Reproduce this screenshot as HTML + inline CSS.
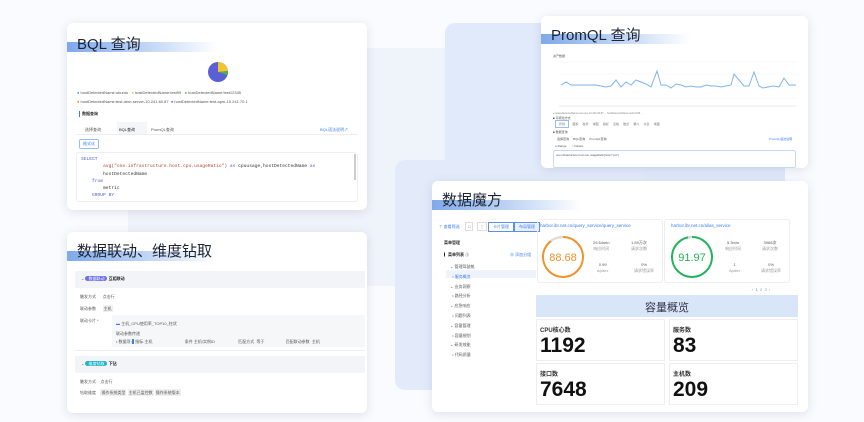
<!DOCTYPE html>
<html><head><meta charset="utf-8"><style>
*{margin:0;padding:0;box-sizing:border-box}
body{width:864px;height:422px;background:#f9fbfe;position:relative;overflow:hidden;font-family:"Liberation Sans","Noto Sans CJK SC",sans-serif;color:#333}
.bg{position:absolute;border-radius:10px}
.card{position:absolute;background:#fff;border-radius:6px;box-shadow:0 2px 10px rgba(60,80,130,.15);overflow:hidden}
.tt{position:absolute;left:0;font-size:15px;color:#1d2433;padding-left:10px;line-height:18px;z-index:2}
.bar{position:absolute;left:0;height:10px;background:linear-gradient(90deg,#7fa9ea,#c9dbf7 60%,rgba(255,255,255,0));z-index:1}
.s{position:absolute;font-size:4px;color:#555;white-space:nowrap}
.b{position:absolute;background:#f3f4f7}
.num{position:absolute;font-size:21px;font-weight:bold;color:#111}
.lab{position:absolute;font-size:6px;font-weight:bold;color:#333}
</style></head><body>
<div class="bg" style="left:128px;top:48px;width:320px;height:238px;background:#eff3fa;border-radius:0"></div>
<div class="bg" style="left:445px;top:23px;width:340px;height:280px;background:#e1eafa"></div>
<div class="bg" style="left:395px;top:160px;width:250px;height:230px;background:#e3ebfa"></div>

<!-- BQL -->
<div class="card" style="left:67px;top:23px;width:300px;height:187px">
<div class="bar" style="top:19px;width:150px"></div>
<div class="tt" style="top:13px">BQL 查询</div>
<svg style="position:absolute;left:140px;top:38px" width="22" height="22" viewBox="0 0 22 22"><circle cx="11" cy="11" r="10" fill="#5b5fd6"/><path d="M11 11V1A10 10 0 0 1 21 10Z" fill="#f4c430"/><path d="M11 11L21 10A10 10 0 0 1 20.5 14Z" fill="#4caf50"/></svg>
<div class="s" style="left:10px;top:67px"><span style="color:#3b8ff0">●</span> hostDetectedName:ubuntu &nbsp;&nbsp;<span style="color:#f4c430">●</span> hostDetectedName:test99 &nbsp;&nbsp;<span style="color:#4caf50">●</span> hostDetectedName:test12345</div>
<div class="s" style="left:10px;top:76px"><span style="color:#f08030">●</span> hostDetectedName:test-dem-server-10.241.60.87 &nbsp;<span style="color:#5b5fd6">●</span> hostDetectedName:test-apm-10.241.70.1</div>
<div class="s" style="left:12px;top:88px;font-weight:bold;color:#222;border-left:1px solid #3b7ef0;padding-left:2px">数据查询</div>
<div style="position:absolute;left:50px;top:99px;width:30px;height:12px;background:#f5f6f8"></div>
<div class="s" style="left:18px;top:104px">选择查询</div><div class="s" style="left:52px;top:104px;color:#222">BQL查询</div><div class="s" style="left:84px;top:104px">PromQL查询</div>
<div class="s" style="left:253px;top:104px;color:#3b7ef0">BQL语法说明↗</div>
<div style="position:absolute;left:9px;top:111px;width:282px;height:1px;background:#eee"></div>
<div class="s" style="left:12px;top:116px;border:1px solid #9bbcf0;color:#3b7ef0;padding:1px 3px;border-radius:2px">格式化</div>
<div style="position:absolute;left:9px;top:129px;width:282px;height:50px;border:1px solid #eee;border-radius:3px"></div>
<div class="s" style="left:14px;top:133px;font-family:'Liberation Mono',monospace;font-size:4.6px;line-height:7.3px;color:#333">
<span style="color:#5560d0">SELECT</span><br>
&nbsp;&nbsp;&nbsp;&nbsp;&nbsp;&nbsp;&nbsp;&nbsp;<span style="color:#b0453a">avg("one.infrastructure.host.cpu.usageRatio")</span> <span style="color:#5560d0">as</span> cpuusage,hostDetectedName <span style="color:#5560d0">as</span><br>
&nbsp;&nbsp;&nbsp;&nbsp;&nbsp;&nbsp;&nbsp;&nbsp;hostDetectedName<br>
&nbsp;&nbsp;&nbsp;&nbsp;<span style="color:#5560d0">from</span><br>
&nbsp;&nbsp;&nbsp;&nbsp;&nbsp;&nbsp;&nbsp;&nbsp;metric<br>
&nbsp;&nbsp;&nbsp;&nbsp;<span style="color:#5560d0">GROUP BY</span></div>
<div style="position:absolute;left:287px;top:131px;width:2px;height:26px;background:#ccc"></div>
</div>

<!-- Linkage -->
<div class="card" style="left:67px;top:232px;width:300px;height:181px">
<div class="bar" style="top:19px;width:150px"></div>
<div class="tt" style="top:11px">数据联动、维度钻取</div>
<div class="b" style="left:8px;top:39px;width:290px;height:17px"></div>
<div class="s" style="left:14px;top:44px">⌄ <span style="background:#6a6ff0;color:#fff;border-radius:4px;padding:0 3px">数据联动</span> <b style="color:#222">互相联动</b></div>
<div class="s" style="left:13px;top:62px">触发方式 &nbsp;&nbsp;&nbsp;&nbsp;&nbsp;点击行</div>
<div class="s" style="left:13px;top:74px">联动参数 &nbsp;&nbsp;&nbsp;&nbsp;&nbsp;<span style="background:#f0f0f0;padding:1px">主机</span></div>
<div class="s" style="left:13px;top:86px">联动卡片 *</div>
<div class="b" style="left:45px;top:83px;width:253px;height:32px;background:#f6f7f9"></div>
<div class="s" style="left:49px;top:89px"><span style="color:#3b7ef0">▬</span> 主机_CPU使用率_TOP10_柱状</div>
<div class="s" style="left:49px;top:99px">联动参数传递</div>
<div class="s" style="left:49px;top:107px">• 数据项 <span style="background:#3b7ef0;color:#3b7ef0">■</span> 指标-主机 &nbsp;&nbsp;&nbsp;&nbsp;&nbsp;&nbsp;&nbsp;&nbsp;&nbsp;&nbsp;&nbsp;&nbsp;&nbsp;&nbsp;&nbsp;&nbsp;&nbsp;&nbsp;&nbsp;&nbsp;&nbsp;&nbsp;&nbsp;&nbsp;&nbsp;&nbsp;&nbsp; 条件 主机/实例ID &nbsp;&nbsp;&nbsp;&nbsp;&nbsp;&nbsp;&nbsp;&nbsp;&nbsp;&nbsp;&nbsp;&nbsp;&nbsp;&nbsp;&nbsp;&nbsp;&nbsp;&nbsp;&nbsp; 匹配方式 &nbsp;等于 &nbsp;&nbsp;&nbsp;&nbsp;&nbsp;&nbsp;&nbsp;&nbsp;&nbsp;&nbsp;&nbsp;&nbsp;&nbsp;&nbsp;&nbsp;&nbsp;&nbsp; 匹配联动参数 &nbsp;主机</div>
<div style="position:absolute;left:8px;top:118px;width:290px;height:1px;background:#eee"></div>
<div class="b" style="left:8px;top:124px;width:290px;height:17px"></div>
<div class="s" style="left:14px;top:129px">⌄ <span style="background:#1fb5c8;color:#fff;border-radius:4px;padding:0 3px">维度钻取</span> <b style="color:#222">下钻</b></div>
<div class="s" style="left:13px;top:147px">触发方式 &nbsp;&nbsp;&nbsp;点击行</div>
<div class="s" style="left:13px;top:158px">钻取维度 &nbsp;&nbsp;&nbsp;<span style="background:#f0f0f0;padding:1px">操作系统类型</span> <span style="background:#f0f0f0;padding:1px">主机已监控数</span> <span style="background:#f0f0f0;padding:1px">操作系统版本</span></div>
</div>

<!-- PromQL -->
<div class="card" style="left:541px;top:16px;width:267px;height:152px">
<div class="bar" style="top:18px;width:150px"></div>
<div class="tt" style="top:11px">PromQL 查询</div>
<div class="s" style="left:12px;top:38px;font-size:3px">资产数据</div>
<svg style="position:absolute;left:10px;top:42px" width="250" height="52" viewBox="0 0 250 52"><g stroke="#eee" stroke-width=".4"><line x1="8" y1="4" x2="245" y2="4"/><line x1="8" y1="16" x2="245" y2="16"/><line x1="8" y1="28" x2="245" y2="28"/><line x1="8" y1="40" x2="245" y2="40"/></g><polyline fill="none" stroke="#7fb6ee" stroke-width="1" points="10,27 15,24 20,27 30,27 45,27 55,29 60,28 65,22 70,29 75,24 80,27 85,22 95,26 100,29 106,13 110,27 115,27 120,30 125,26 130,27 135,29 140,28 145,29 150,29 155,27 160,28 165,28 170,29 175,28 180,27 183,16 188,22 193,28 198,28 203,14 208,28 212,30 217,29 222,28 228,29 233,20 238,27 245,27"/><line x1="8" y1="48" x2="245" y2="48" stroke="#ccc" stroke-width=".4"/></svg>
<div class="s" style="left:12px;top:96px;font-size:2.5px;color:#888">● spaceDetectedName:test-cpu-10.241.60.87 ... hostDetectedName:test12345 ...</div>
<div class="s" style="left:12px;top:100px;font-size:3px">■ 可视化方式</div>
<div class="s" style="left:14px;top:106px;font-size:3px;color:#777"><span style="border:1px solid #9bbcf0;padding:1px 3px">折线</span>&nbsp;&nbsp;&nbsp; 面积 &nbsp;&nbsp;&nbsp; 柱状 &nbsp;&nbsp;&nbsp; 饼图 &nbsp;&nbsp;&nbsp; 指标 &nbsp;&nbsp;&nbsp; 表格 &nbsp;&nbsp;&nbsp; 散点 &nbsp;&nbsp;&nbsp; 漏斗 &nbsp;&nbsp;&nbsp; 仪表 &nbsp;&nbsp;&nbsp; 地图</div>
<div class="s" style="left:12px;top:114px;font-size:3px">■ 数据查询</div>
<div class="s" style="left:16px;top:121px;font-size:3px">选择查询 &nbsp;&nbsp;&nbsp; BQL查询 &nbsp;&nbsp;&nbsp; PromQL查询</div>
<div class="s" style="left:228px;top:121px;font-size:3px;color:#3b7ef0">PromQL语法说明</div>
<div class="s" style="left:14px;top:128px;font-size:3px"><span style="color:#3b7ef0">●</span> Range &nbsp;&nbsp;&nbsp;&nbsp; ○ Instant</div>
<div style="position:absolute;left:12px;top:134px;width:243px;height:18px;border:1px solid #c8d8f0;border-radius:2px"></div>
<div class="s" style="left:15px;top:137px;font-size:2.8px">one.infrastructure.host.cpu.usageRatio{host="xxx"}</div>
</div>

<!-- 数据魔方 -->
<div class="card" style="left:432px;top:181px;width:376px;height:231px">
<div class="bar" style="top:19px;width:150px"></div>
<div class="tt" style="top:11px">数据魔方</div>
<div class="s" style="left:7px;top:43px;color:#3b7ef0">⊤ 查看筛选</div>
<div class="s" style="left:33px;top:41px;border:1px solid #ddd;padding:1px 2px">□</div>
<div class="s" style="left:45px;top:41px;border:1px solid #ddd;padding:1px 2px">⋮</div>
<div class="s" style="left:56px;top:41px;border:1px solid #5b8ff0;color:#3b7ef0;padding:1px 4px">卡片管理</div>
<div class="s" style="left:82px;top:41px;border:1px solid #5b8ff0;color:#3b7ef0;background:#eaf1fd;padding:1px 4px">布局管理</div>
<div class="s" style="left:12px;top:59px;font-weight:bold;color:#222">菜单管理</div>
<div class="s" style="left:12px;top:71px;font-weight:bold;color:#222">▎菜单列表 ⓘ</div>
<div class="s" style="left:78px;top:71px;color:#3b7ef0">⊕ 添加分组</div>
<div style="position:absolute;left:14px;top:89px;width:90px;height:8px;background:#eef3fc"></div>
<div class="s" style="left:18px;top:81px;line-height:9.8px">⌄ 管理驾驶舱<br>&nbsp;&nbsp;<span style="color:#3b7ef0">• 服务概览</span><br>⌄ 业务洞察<br>&nbsp;&nbsp;• 路径分析<br>⌄ 应急响应<br>&nbsp;&nbsp;• 问题列表<br>⌄ 容量管理<br>&nbsp;&nbsp;• 容量規划<br>⌄ 研发效能<br>&nbsp;&nbsp;• 代码质量</div>
<div style="position:absolute;left:105px;top:38px;width:126px;height:64px;border:1px solid #eee;border-radius:3px"></div>
<div style="position:absolute;left:232px;top:38px;width:126px;height:64px;border:1px solid #eee;border-radius:3px"></div>
<div class="s" style="left:108px;top:42px;color:#3b7ef0;font-size:4.5px">harbor.ibr.net.cn/query_service/query_service</div>
<div class="s" style="left:239px;top:42px;color:#3b7ef0;font-size:4.5px">harbor.ibr.net.cn/alias_service</div>
<svg style="position:absolute;left:109px;top:54px" width="44" height="44"><circle cx="22" cy="22" r="20" fill="none" stroke="#f0922a" stroke-width="2"/><path d="M22 2A20 20 0 0 0 10 6" fill="none" stroke="#ddd" stroke-width="2"/><text x="22" y="26" text-anchor="middle" font-size="11" fill="#f0922a" font-family="Liberation Sans">88.68</text></svg>
<svg style="position:absolute;left:238px;top:54px" width="44" height="44"><circle cx="22" cy="22" r="20" fill="none" stroke="#22b25a" stroke-width="2"/><path d="M22 2A20 20 0 0 0 18 2.4" fill="none" stroke="#ddd" stroke-width="2"/><text x="22" y="26" text-anchor="middle" font-size="11" fill="#22b25a" font-family="Liberation Sans">91.97</text></svg>
<div class="s" style="left:161px;top:59px;text-align:center;line-height:6px">29.64min<br><span style="color:#999">响应时间</span></div>
<div class="s" style="left:199px;top:59px;text-align:center;line-height:6px">1.59万次<br><span style="color:#999">请求次数</span></div>
<div class="s" style="left:165px;top:81px;text-align:center;line-height:6px">0.99<br><span style="color:#999">Apdex</span></div>
<div class="s" style="left:202px;top:81px;text-align:center;line-height:6px">0%<br><span style="color:#999">请求错误率</span></div>
<div class="s" style="left:293px;top:59px;text-align:center;line-height:6px">5.3min<br><span style="color:#999">响应时间</span></div>
<div class="s" style="left:330px;top:59px;text-align:center;line-height:6px">3968次<br><span style="color:#999">请求次数</span></div>
<div class="s" style="left:297px;top:81px;text-align:center;line-height:6px">1<br><span style="color:#999">Apdex</span></div>
<div class="s" style="left:329px;top:81px;text-align:center;line-height:6px">0%<br><span style="color:#999">请求错误率</span></div>
<div class="s" style="left:320px;top:106px;color:#999">‹ &nbsp;<span style="color:#3b7ef0">1</span> &nbsp;2 &nbsp;3 &nbsp;›</div>
<div style="position:absolute;left:104px;top:114px;width:262px;height:22px;background:#d8e6f8"></div>
<div style="position:absolute;left:104px;top:118px;width:262px;text-align:center;font-size:11px;color:#334">容量概览</div>
<div style="position:absolute;left:104px;top:138px;width:129px;height:42px;border:1px solid #eee;background:#fff"></div>
<div style="position:absolute;left:237px;top:138px;width:129px;height:42px;border:1px solid #eee"></div>
<div style="position:absolute;left:104px;top:182px;width:129px;height:42px;border:1px solid #eee"></div>
<div style="position:absolute;left:237px;top:182px;width:129px;height:42px;border:1px solid #eee"></div>
<div class="lab" style="left:108px;top:144px">CPU核心数</div>
<div class="num" style="left:108px;top:153px">1192</div>
<div class="lab" style="left:241px;top:144px">服务数</div>
<div class="num" style="left:241px;top:153px">83</div>
<div class="lab" style="left:108px;top:188px">接口数</div>
<div class="num" style="left:108px;top:197px">7648</div>
<div class="lab" style="left:241px;top:188px">主机数</div>
<div class="num" style="left:241px;top:197px">209</div>
</div>
</body></html>
